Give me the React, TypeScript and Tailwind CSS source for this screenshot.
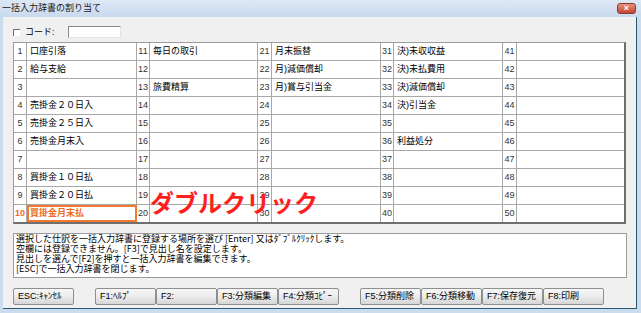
import React from 'react'

const cols: [number, string][][] = [
  [[1, '口座引落'], [2, '給与支給'], [3, ''], [4, '売掛金２０日入'], [5, '売掛金２５日入'], [6, '売掛金月末入'], [7, ''], [8, '買掛金１０日払'], [9, '買掛金２０日払'], [10, '買掛金月末払']],
  [[11, '毎日の取引'], [12, ''], [13, '旅費精算'], [14, ''], [15, ''], [16, ''], [17, ''], [18, ''], [19, ''], [20, '']],
  [[21, '月末振替'], [22, '月)減価償却'], [23, '月)賞与引当金'], [24, ''], [25, ''], [26, ''], [27, ''], [28, ''], [29, ''], [30, '']],
  [[31, '決)未収収益'], [32, '決)未払費用'], [33, '決)減価償却'], [34, '決)引当金'], [35, ''], [36, '利益処分'], [37, ''], [38, ''], [39, ''], [40, '']],
  [[41, ''], [42, ''], [43, ''], [44, ''], [45, ''], [46, ''], [47, ''], [48, ''], [49, ''], [50, '']],
]

const leftKeys = ['F1:ﾍﾙﾌﾟ', 'F2:', 'F3:分類編集', 'F4:分類ｺﾋﾟｰ']
const rightKeys = ['F5:分類削除', 'F6:分類移動', 'F7:保存復元', 'F8:印刷']

function KeyButton({ label }: { label: string }) {
  return (
    <div className="w-[61px] h-[17px] flex items-center pl-[4px] border border-[#8e8f8f] rounded-[2px] bg-gradient-to-b from-[#f7f7f7] via-[#ececec] to-[#d6d6d6] text-[9px] leading-none text-black">
      {label}
    </div>
  )
}

export default function App() {
  return (
    <div className="w-[641px] h-[313px] bg-[#cbdcef] flex flex-col font-['Liberation_Sans','Noto_Sans_CJK_JP',sans-serif] text-black overflow-hidden">
      {/* title bar */}
      <div className="h-[17px] flex items-center justify-between bg-gradient-to-b from-[#dde8f5] to-[#c9daee] pl-[2px] pr-[5px]">
        <span className="text-[9px] leading-none text-[#1a1a1a]">一括入力辞書の割り当て</span>
        <div className="w-[19px] h-[11px] rounded-[3px] border border-[#8a3a2e] bg-gradient-to-b from-[#e3927f] to-[#c2442e] flex items-center justify-center text-white text-[9px] font-bold leading-none">
          ×
        </div>
      </div>

      {/* client area */}
      <div className="flex-1 ml-[3px] mr-[4px] mb-[4px] bg-[#f0f0f0] border-r border-b border-[#2c5a73] flex flex-col pl-[10px] relative">
        <div className="h-[14px] mt-[8px] flex items-center">
          <div className="w-[7px] h-[7px] border-t border-l border-[#6b6b6b] bg-white" />
          <span className="ml-[5px] text-[9px] leading-none">コード:</span>
          <div className="ml-[13px] w-[53px] h-[12px] border-t border-l border-[#8a8a8a] border-r border-b border-r-[#e3e3e3] border-b-[#e3e3e3] bg-white" />
        </div>

        {/* table */}
        <div className="mt-[3px] w-[613px] border-t border-l border-[#9d9d9d] border-r-2 border-b-2 border-r-[#6f6f6f] border-b-[#6f6f6f] bg-white grid grid-cols-[13px_110px_13px_108px_14px_109px_13px_109px_14px_107px] text-[9px]">
          {Array.from({ length: 10 }).map((_, r) =>
            cols.map((col, c) => {
              const [n, name] = col[r]
              const sel = n === 10
              const lastRow = r === 9
              const lastCol = c === 4
              return (
                <React.Fragment key={n}>
                  <div
                    className={`flex items-center justify-center overflow-hidden whitespace-nowrap border-r border-[#a8a8a8] ${lastRow ? 'h-[17px]' : 'h-[18px] border-b'} ${sel ? 'text-[#f06a22] font-bold' : 'text-[#333]'}`}
                  >
                    {n}
                  </div>
                  <div
                    className={`flex items-center pl-[3px] whitespace-nowrap ${lastCol ? '' : 'border-r border-[#a8a8a8]'} ${lastRow ? 'h-[17px]' : 'h-[18px] border-b border-[#a8a8a8]'} ${sel ? 'outline-2 -outline-offset-2 outline-[#f07a32] text-[#f06a22] font-bold' : ''}`}
                  >
                    {name}
                  </div>
                </React.Fragment>
              )
            })
          )}
        </div>

        {/* annotation */}
        <div className="absolute left-[147px] top-[173px] text-[24px] leading-none font-bold text-[#ff1e1e] font-['Noto_Sans_CJK_JP',sans-serif]">
          ダブルクリック
        </div>

        {/* description */}
        <div className="mt-[9px] w-[614px] h-[45px] bg-white border border-[#9a9a9a] pl-[2px] pt-0 text-[9px] leading-[10px] font-['Noto_Sans_CJK_JP',sans-serif]">
          <div>選択した仕訳を一括入力辞書に登録する場所を選び [Enter] 又はﾀﾞﾌﾞﾙｸﾘｯｸします。</div>
          <div>空欄には登録できません。[F3]で見出し名を設定します。</div>
          <div>見出しを選んで[F2]を押すと一括入力辞書を編集できます。</div>
          <div>[ESC]で一括入力辞書を閉じます。</div>
        </div>

        {/* buttons */}
        <div className="mt-[10px] flex">
          <KeyButton label="ESC:ｷｬﾝｾﾙ" />
          <div className="ml-[21px] flex">
            {leftKeys.map(k => (
              <KeyButton key={k} label={k} />
            ))}
          </div>
          <div className="ml-[21px] flex">
            {rightKeys.map(k => (
              <KeyButton key={k} label={k} />
            ))}
          </div>
        </div>
      </div>
    </div>
  )
}
